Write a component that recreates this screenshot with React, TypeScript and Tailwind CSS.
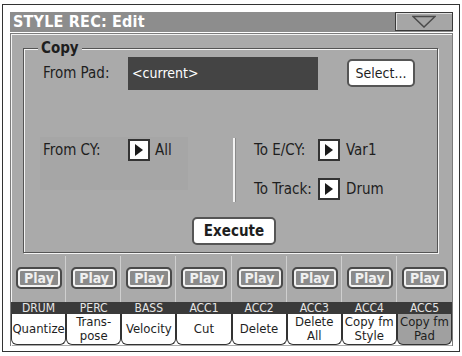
import React from "react";

const Tri = () => (
  <div className="w-[22px] h-[22px] bg-white border-2 border-[#333] flex items-center justify-center shrink-0">
    <svg width="8" height="12" viewBox="0 0 8 12">
      <polygon points="0,0 8,6 0,12" fill="#1a1a1a" />
    </svg>
  </div>
);

export default function App() {
  const cols = [
    { t: "DRUM", b: ["Quantize"] },
    { t: "PERC", b: ["Trans-", "pose"] },
    { t: "BASS", b: ["Velocity"] },
    { t: "ACC1", b: ["Cut"] },
    { t: "ACC2", b: ["Delete"] },
    { t: "ACC3", b: ["Delete", "All"] },
    { t: "ACC4", b: ["Copy fm", "Style"] },
    { t: "ACC5", b: ["Copy fm", "Pad"], sel: true },
  ];
  return (
    <div className="w-[462px] h-[356px] bg-white pt-[4px] pl-[2px] font-['DejaVu_Sans_Condensed','DejaVu_Sans',sans-serif] text-[#1e1e1e]">
      <div className="w-[458px] h-[348px] border border-[#333] pt-[7px] pl-[7px] pr-[6px] flex flex-col">
        {/* title bar */}
        <div className="h-[20px] bg-[#8d8d8d] flex items-center justify-between">
          <span className="pl-[3px] text-white font-bold text-[16px] leading-none tracking-[0.2px]">
            STYLE REC: Edit
          </span>
          <div className="w-[58px] h-[19px] self-start bg-[#a6a6a6] border border-[#3a3a3a] shadow-[inset_1px_1px_0_#e0e0e0] flex items-center justify-center">
            <svg width="24" height="13" viewBox="0 0 24 13">
              <polygon points="1,1.5 23,1.5 12,12" fill="none" stroke="#4a4a4a" strokeWidth="1.5" />
            </svg>
          </div>
        </div>
        <div className="h-[1px] bg-white" />
        {/* panel */}
        <div className="h-[313px] bg-[#aaaaaa] border-l border-t border-r border-[#7c7c7c] shadow-[inset_1px_1px_0_#f4f4f4] flex flex-col">
          {/* group box */}
          <div className="relative mt-[14px] ml-[12px] w-[415px] h-[205px] border border-[#555] shadow-[inset_1px_1px_0_#f4f4f4,1px_1px_0_#f4f4f4] flex flex-col">
            <div className="absolute left-[14px] top-[-9px] px-[3px] bg-[#aaaaaa] font-bold text-[15px] leading-[16px]">
              Copy
            </div>
            {/* From Pad row */}
            <div className="mt-[8px] flex items-start">
              <div className="w-[104px] pl-[19px] h-[33px] flex items-center text-[15px]">From Pad:</div>
              <div className="w-[190px] h-[33px] bg-[#444444] text-white text-[14px] pl-[4px] flex items-center">
                &lt;current&gt;
              </div>
              <div className="ml-[29px] mt-[2px] w-[68px] h-[28px] bg-white border-2 border-[#555] rounded-[5px] flex items-center justify-center text-[14px]">
                Select...
              </div>
            </div>
            {/* CV section */}
            <div className="mt-[47px] h-[65px] flex items-start">
              <div className="ml-[16px] w-[148px] h-[53px] bg-[#a6a6a6] pt-[2px]">
                <div className="h-[22px] flex items-center">
                  <div className="w-[88px] pl-[3px] text-[15px]">From CY:</div>
                  <Tri />
                  <span className="ml-[5px] text-[15px]">All</span>
                </div>
              </div>
              <div className="ml-[45px] mt-[1px] w-[2px] h-[64px] bg-[#f2f2f2] shadow-[1px_0_0_#8a8a8a]" />
              <div className="ml-[19px] mt-[2px] flex flex-col gap-[17px]">
                <div className="h-[22px] flex items-center">
                  <div className="w-[64px] text-[15px]">To E/CY:</div>
                  <Tri />
                  <span className="ml-[6px] text-[15px]">Var1</span>
                </div>
                <div className="h-[22px] flex items-center">
                  <div className="w-[64px] text-[15px]">To Track:</div>
                  <Tri />
                  <span className="ml-[6px] text-[15px]">Drum</span>
                </div>
              </div>
            </div>
            <div className="mt-[15px] ml-[168px] w-[84px] h-[28px] bg-white border-2 border-[#555] rounded-[5px] flex items-center justify-center font-bold text-[15px]">
              Execute
            </div>
          </div>
          {/* play row */}
          <div className="mt-[3px] h-[46px] grid grid-cols-8">
            {cols.map((c, i) => (
              <div key={c.t} className={"h-full pt-[11px] pl-[5px] " + (i < 7 ? "border-r border-[#cfcfcf]" : "")}>
                <div className="w-[46px] h-[22px] rounded-[5px] border-2 border-[#4a4a4a] bg-[#8a8a8a] shadow-[inset_0_0_0_2px_#f2f2f2] flex items-center justify-center text-[#f0f0f0] font-bold text-[14px] leading-none">
                  Play
                </div>
              </div>
            ))}
          </div>
          {/* track label strip */}
          <div className="h-[12px] bg-[#3a3a3a] grid grid-cols-8">
            {cols.map((c) => (
              <div key={c.t} className="flex items-center justify-center text-[#e6e6e6] text-[12px] leading-none">
                {c.t}
              </div>
            ))}
          </div>
          {/* tabs */}
          <div className="h-[31px] bg-white grid grid-cols-8">
            {cols.map((c) => (
              <div
                key={c.t}
                className={
                  "h-full border border-t-0 border-[#333] rounded-b-[6px] flex flex-col items-center justify-center text-[13px] leading-[14px] " +
                  (c.sel ? "bg-[#a0a0a0]" : "bg-white")
                }
              >
                {c.b.map((l) => (
                  <span key={l} className="leading-[14px]">{l}</span>
                ))}
              </div>
            ))}
          </div>
        </div>
      </div>
    </div>
  );
}
